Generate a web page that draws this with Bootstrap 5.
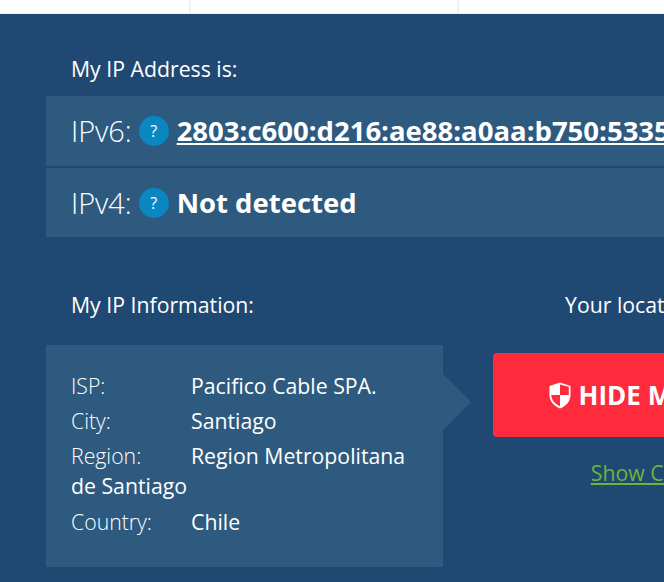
<!DOCTYPE html>
<html lang="en">
<head>
    <meta charset="UTF-8">
    <meta name="viewport" content="width=device-width, initial-scale=1.0">
    <title>My IP Address</title>
    <link rel="stylesheet" href="https://cdn.jsdelivr.net/npm/bootstrap@5.3.0/dist/css/bootstrap.min.css">
    <style>
        html, body { overflow: hidden; background: #1f4972; }
        body { font-family: "Open Sans", "Liberation Sans", sans-serif; font-size: 21.25px; line-height: 30px; color: #fff; }
        .top-strip { height: 14px; background: #fff; border-bottom: 1px solid #eef0f2; }
        .top-cell { height: 100%; border-right: 2px solid #f1f2f4; }
        .top-cell-a { width: 191px; }
        .top-cell-b { width: 268px; }
        .ip-panel { width: 1100px; padding: 40px 0 0 46px; }
        .panel-label { padding-left: 25px; }
        .ip-rows { margin-top: 12px; }
        .ip-row { height: 70px; padding-left: 25px; margin-bottom: 2px; background: #2e5a80; white-space: nowrap; }
        .ip-row:last-child { height: 69px; margin-bottom: 0; }
        .ip-kind { font-size: 28.8px; font-weight: 300; }
        .help-dot { width: 30px; height: 30px; margin: 0 8px 0 7px; background: #0a87c0; font-size: 16px; }
        .ip-value { font-size: 27.5px; font-weight: 700; color: #fff; }
        .info-section { margin-top: 53px; }
        .info-left { width: 397px; }
        .info-box { position: relative; margin-top: 25px; padding: 26px 25px 30px; background: #2e5a80; }
        .info-box::after { content: ""; position: absolute; left: 100%; top: 29px; border-style: solid; border-width: 28px 0 28px 28px; border-color: transparent transparent transparent #2e5a80; }
        .info-line { margin-bottom: 5px; }
        .info-line:last-child { margin-bottom: 0; padding-top: 1px; }
        .info-key { display: inline-block; width: 120px; font-weight: 300; }
        .info-right { width: 448px; margin-left: 50px; }
        .hide-btn { width: 100%; height: 84px; margin-top: 33px; padding: 0 0 0 32px; background: #ff2a3c; border: 0; border-radius: 4px; color: #fff; font-size: 26px; font-weight: 700; }
        .hide-btn:hover { background: #ff2a3c; color: #fff; }
        .details-link { margin-top: 21px; color: #6db33f; }
        .details-link:hover { color: #6db33f; }
    </style>
</head>
<body>

    <!-- Top table edge -->
    <div class="top-strip d-flex">
        <div class="top-cell top-cell-a"></div>
        <div class="top-cell top-cell-b"></div>
    </div>

    <div class="ip-panel">
        <div class="panel-label">My IP Address is:</div>

        <div class="ip-rows">
            <div class="ip-row d-flex align-items-center">
                <span class="ip-kind">IPv6:</span>
                <span class="help-dot rounded-circle d-flex align-items-center justify-content-center">?</span>
                <a class="ip-value" href="#">2803:c600:d216:ae88:a0aa:b750:5335:1f0c</a>
            </div>
            <div class="ip-row d-flex align-items-center">
                <span class="ip-kind">IPv4:</span>
                <span class="help-dot rounded-circle d-flex align-items-center justify-content-center">?</span>
                <span class="ip-value">Not detected</span>
            </div>
        </div>

        <div class="info-section d-flex">
            <div class="info-left flex-shrink-0">
                <div class="panel-label">My IP Information:</div>
                <div class="info-box">
                    <div class="info-line"><span class="info-key">ISP:</span>Pacifico Cable SPA.</div>
                    <div class="info-line"><span class="info-key">City:</span>Santiago</div>
                    <div class="info-line"><span class="info-key">Region:</span>Region Metropolitana de Santiago</div>
                    <div class="info-line"><span class="info-key">Country:</span>Chile</div>
                </div>
            </div>
            <div class="info-right flex-shrink-0 text-center">
                <div>Your location may be exposed!</div>
                <button class="btn hide-btn d-flex align-items-center justify-content-center gap-2" type="button">
                    <svg width="22" height="27" viewBox="0 0 22 27">
                        <path d="M11 .5 21.500 4v9c0 6.500-4.500 11-10.500 13.500C5 24 .5 19.500.5 13V4z" fill="#fff"/>
                        <path d="M11 2.500V13h8.800V4.800zM11 13H2.200c.3 5 3.800 9 8.800 11.300z" fill="#ff2a3c"/>
                    </svg>
                    HIDE MY IP ADDRESS NOW
                </button>
                <a class="details-link d-inline-block" href="#">Show Complete IP Details</a>
            </div>
        </div>
    </div>

    <script src="https://cdn.jsdelivr.net/npm/bootstrap@5.3.0/dist/js/bootstrap.bundle.min.js"></script>
</body>
</html>
